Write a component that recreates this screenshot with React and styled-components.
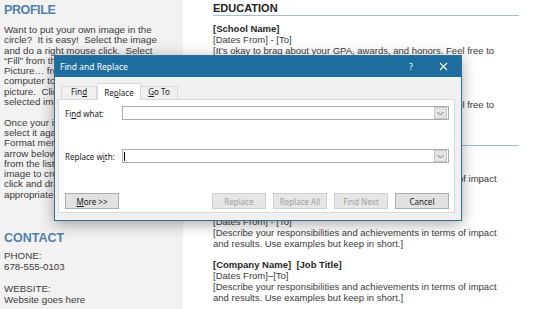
import React from "react";
import styled, { createGlobalStyle } from "styled-components";

const GlobalStyle = createGlobalStyle`
  html, body {
    margin: 0;
    padding: 0;
    background: #ffffff;
  }
  #root {
    width: 554px;
    height: 309px;
    overflow: hidden;
  }
`;

const Page = styled.div`
  position: relative;
  display: flex;
  width: 554px;
  height: 309px;
  overflow: hidden;
  font-family: "Liberation Sans", Arial, sans-serif;
  color: #3b3b3b;
`;

const Sidebar = styled.aside`
  width: 183px;
  flex: none;
  box-sizing: border-box;
  padding: 3px 0 0 4px;
  background: #f3f2f2;
`;

const SideHeading = styled.h2`
  margin: ${(p) => (p.$first ? "0" : "31px 0 0")};
  font-size: 12.5px;
  line-height: 14px;
  font-weight: 700;
  letter-spacing: ${(p) => (p.$first ? -0.4 : 0)}px;
  color: #4f80ad;
`;

const SideText = styled.p`
  margin: ${(p) => p.$gap}px 0 0;
  font-size: 9.75px;
  line-height: ${(p) => p.$lh}px;
  white-space: pre;
`;

const Main = styled.main`
  flex: none;
  width: 306px;
  padding: 2px 0 0 30px;
`;

const SectionTitle = styled.h3`
  margin: ${(p) => (p.$first ? "0" : "11px 0 0")};
  padding-bottom: 1px;
  border-bottom: 1px solid #a9bdd0;
  font-size: 11px;
  line-height: 12px;
  font-weight: 700;
  color: #222;
`;

const Entry = styled.div`
  margin-top: ${(p) => p.$gap}px;
  font-size: 9.5px;
  line-height: 11px;
  white-space: pre;
`;

const EntryTitle = styled.div`
  font-weight: 700;
  color: #262626;
`;

/* ---------- dialog ---------- */

const Dialog = styled.div`
  position: absolute;
  left: 54px;
  top: 55px;
  width: 408px;
  height: 166px;
  box-sizing: border-box;
  display: flex;
  flex-direction: column;
  background: #f0f0f0;
  border: 1px solid #2f6f98;
  box-shadow: 0 3px 14px rgba(0, 0, 0, 0.35);
  font-family: "Noto Sans", "Open Sans", sans-serif;
  font-size: 8px;
  color: #1a1a1a;
`;

const TitleBar = styled.div`
  display: flex;
  align-items: center;
  height: 21px;
  flex: none;
  padding-left: 5px;
  background: #1d6e9e;
  color: #ffffff;
  font-size: 8.5px;
`;

const TitleText = styled.span`
  flex: 1;
`;

const TitleControls = styled.div`
  display: flex;
  gap: 4px;
  margin-right: 4px;
`;

const ControlButton = styled.span`
  display: flex;
  align-items: center;
  justify-content: center;
  width: 28px;
  height: 21px;
  font-size: 9px;
`;

const Body = styled.div`
  flex: 1;
  display: flex;
  flex-direction: column;
  padding: 6px 6px 7px 3px;
`;

const Tabs = styled.div`
  display: flex;
  align-items: flex-end;
  height: 17px;
  padding-left: 4px;
  margin-bottom: -1px;
  position: relative;
  z-index: 1;
`;

const Tab = styled.div`
  box-sizing: border-box;
  width: ${(p) => p.$w}px;
  height: ${(p) => (p.$active ? 17 : 14)}px;
  display: flex;
  align-items: flex-end;
  justify-content: center;
  padding-bottom: 2px;
  background: ${(p) => (p.$active ? "#ffffff" : "#f0f0f0")};
  border: 1px solid #d9d9d9;
  border-bottom: ${(p) => (p.$active ? "none" : "1px solid #d9d9d9")};
  margin-left: ${(p) => (p.$active ? 0 : -1)}px;
  line-height: 10px;
`;

const Key = styled.span`
  text-decoration: underline;
  text-underline-offset: 1px;
`;

const Panel = styled.div`
  flex: 1;
  display: flex;
  flex-direction: column;
  background: #ffffff;
  border: 1px solid #d9d9d9;
  padding: 6px 5px 3px 6px;
`;

const FieldRow = styled.div`
  display: flex;
  align-items: center;
  height: 14px;
  margin-top: ${(p) => (p.$first ? 0 : 29)}px;
`;

const FieldLabel = styled.label`
  width: 57px;
  flex: none;
`;

const Combo = styled.div`
  flex: 1;
  height: 14px;
  box-sizing: border-box;
  display: flex;
  align-items: center;
  border: 1px solid #ababab;
  background: #ffffff;
`;

const ComboText = styled.div`
  flex: 1;
  display: flex;
  align-items: center;
  padding-left: 1px;
`;

const Caret = styled.span`
  width: 1px;
  height: 9px;
  background: #000;
`;

const DropArrow = styled.span`
  width: 11px;
  height: 10px;
  margin-right: 1px;
  display: flex;
  align-items: center;
  justify-content: center;
  background: #e5e5e5;
  border: 1px solid #c6c6c6;
`;

const ButtonRow = styled.div`
  margin-top: auto;
  display: flex;
  gap: 7px;
`;

const Spacer = styled.div`
  flex: 1;
`;

const Button = styled.div`
  box-sizing: border-box;
  width: 54px;
  height: 16px;
  display: flex;
  align-items: center;
  justify-content: center;
  background: ${(p) => (p.$disabled ? "#e6e6e6" : "#e1e1e1")};
  border: 1px solid ${(p) => (p.$disabled ? "#d0d0d0" : "#adadad")};
  color: ${(p) => (p.$disabled ? "#a0a0a0" : "#1a1a1a")};
`;

const Chevron = () => (
  <svg width="7" height="5" viewBox="0 0 7 5">
    <path d="M0.5 1 L3.5 4 L6.5 1" fill="none" stroke="#777" strokeWidth="1" />
  </svg>
);

const CloseIcon = () => (
  <svg width="9" height="9" viewBox="0 0 9 9">
    <path d="M1 1 L8 8 M8 1 L1 8" stroke="#fff" strokeWidth="1.1" />
  </svg>
);

const profileA = `Want to put your own image in the
circle?  It is easy!  Select the image
and do a right mouse click.  Select
“Fill” from the menu of choices, and
Picture… from the list.  Select from your
computer to replace the current
picture.  Click OK to insert the
selected image.`;

const profileB = `Once your image is in place,
select it again, and go to the Picture
Format menu.  Click the drop-down
arrow below Crop and select Fill
from the list, then drag the
image to crop it as needed.  Then
click and drag the handles to the
appropriate size.`;

const school = `[Dates From] - [To]
[It’s okay to brag about your GPA, awards, and honors. Feel free to
summarize your coursework too.]`;

const job = `[Describe your responsibilities and achievements in terms of impact
and results. Use examples but keep in short.]`;

const jobs = [
  { dates: "[Dates From] - [To]" },
  { dates: "[Dates From] - [To]" },
  { dates: "[Dates From]–[To]" },
];

export default function App() {
  return (
    <>
      <GlobalStyle />
      <Page>
        <Sidebar>
          <SideHeading $first>PROFILE</SideHeading>
          <SideText $gap={8} $lh={10.3}>{profileA}</SideText>
          <SideText $gap={10.3} $lh={10.3}>{profileB}</SideText>
          <SideHeading>CONTACT</SideHeading>
          <SideText $gap={5} $lh={11}>{"PHONE:\n678-555-0103"}</SideText>
          <SideText $gap={11} $lh={11}>{"WEBSITE:\nWebsite goes here"}</SideText>
        </Sidebar>

        <Main>
          <SectionTitle $first>EDUCATION</SectionTitle>
          <Entry $gap={7}>
            <EntryTitle>[School Name]</EntryTitle>
            {school}
          </Entry>
          <Entry $gap={10}>
            <EntryTitle>[School Name]</EntryTitle>
            {school}
          </Entry>
          <SectionTitle>WORK EXPERIENCE</SectionTitle>
          {jobs.map((j, i) => (
            <Entry key={i} $gap={i === 0 ? 5 : 10}>
              <EntryTitle>[Company Name]  [Job Title]</EntryTitle>
              {j.dates}
              {"\n"}
              {job}
            </Entry>
          ))}
        </Main>

        <Dialog>
          <TitleBar>
            <TitleText>Find and Replace</TitleText>
            <TitleControls>
              <ControlButton>?</ControlButton>
              <ControlButton>
                <CloseIcon />
              </ControlButton>
            </TitleControls>
          </TitleBar>
          <Body>
            <Tabs>
              <Tab $w={36}>
                <span>
                  Fin<Key>d</Key>
                </span>
              </Tab>
              <Tab $w={44} $active>
                <span>
                  Re<Key>p</Key>lace
                </span>
              </Tab>
              <Tab $w={38}>
                <span>
                  <Key>G</Key>o To
                </span>
              </Tab>
            </Tabs>
            <Panel>
              <FieldRow $first>
                <FieldLabel>
                  Fi<Key>n</Key>d what:
                </FieldLabel>
                <Combo>
                  <ComboText />
                  <DropArrow>
                    <Chevron />
                  </DropArrow>
                </Combo>
              </FieldRow>
              <FieldRow>
                <FieldLabel>
                  Replace w<Key>i</Key>th:
                </FieldLabel>
                <Combo>
                  <ComboText>
                    <Caret />
                  </ComboText>
                  <DropArrow>
                    <Chevron />
                  </DropArrow>
                </Combo>
              </FieldRow>
              <ButtonRow>
                <Button>
                  <span>
                    <Key>M</Key>ore &gt;&gt;
                  </span>
                </Button>
                <Spacer />
                <Button $disabled>Replace</Button>
                <Button $disabled>Replace All</Button>
                <Button $disabled>Find Next</Button>
                <Button>Cancel</Button>
              </ButtonRow>
            </Panel>
          </Body>
        </Dialog>
      </Page>
    </>
  );
}
